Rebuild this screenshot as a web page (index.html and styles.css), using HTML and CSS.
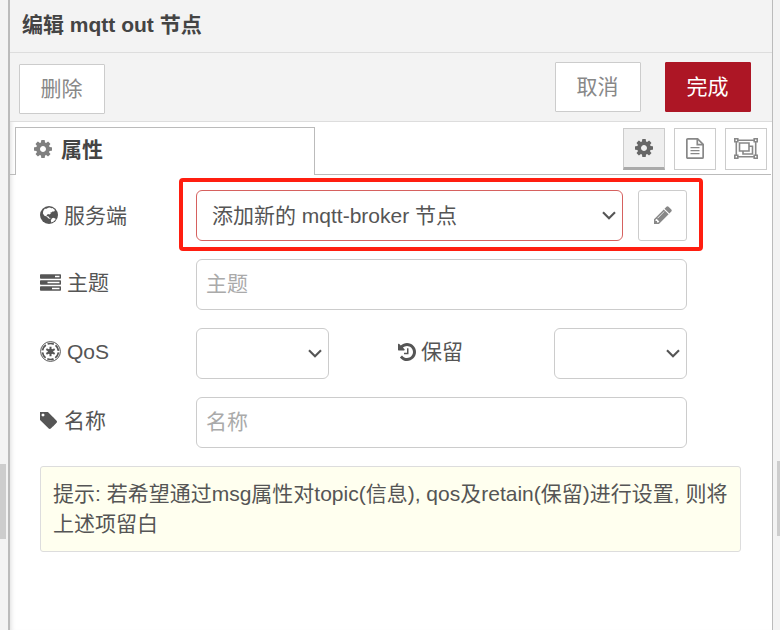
FILE: index.html
```html
<!DOCTYPE html>
<html lang="zh-CN">
<head>
<meta charset="utf-8">
<title>编辑 mqtt out 节点</title>
<link rel="stylesheet" href="styles.css">
</head>
<body>
<svg class="defs" aria-hidden="true">
  <symbol id="cog" viewBox="128 128 1536 1536"><path d="M1152 896q0-106-75-181t-181-75-181 75-75 181 75 181 181 75 181-75 75-181zm512-109v222q0 12-8 23t-20 13l-185 28q-19 54-39 91 35 50 107 138 10 12 10 25t-9 23q-27 37-99 108t-94 71q-12 0-26-9l-138-108q-44 23-91 38-16 136-29 186-7 28-36 28h-222q-14 0-24.5-8.5t-11.5-21.5l-28-184q-49-16-90-37l-141 107q-10 9-25 9-14 0-25-11-126-114-165-168-7-10-7-23 0-12 8-23 15-21 51-66.5t54-70.5q-27-50-41-99l-183-27q-13-2-21-12.5t-8-23.5v-222q0-12 8-23t19-13l186-28q14-46 39-92-40-57-107-138-10-12-10-24 0-10 9-23 26-36 98.5-107.5t94.5-71.5q13 0 26 10l138 107q44-23 91-38 16-136 29-186 7-28 36-28h222q14 0 24.5 8.5t11.5 21.5l28 184q49 16 90 37l142-107q9-9 24-9 13 0 25 10 129 119 165 170 7 8 7 22 0 12-8 23-15 21-51 66.5t-54 70.5q26 50 41 98l183 28q13 2 21 12.5t8 23.5z"/></symbol>
  <symbol id="chevron" viewBox="0 0 14 9"><path d="M1 1.2l6 6 6-6" fill="none" stroke="#555" stroke-width="2.1"/></symbol>
</svg>
<div class="workspace">
  <div class="gutter"><div class="thumb thumb-left"></div></div>
  <main class="tray">
    <header class="title">编辑 mqtt out 节点</header>
    <div class="toolbar">
      <button class="btn btn-delete">删除</button>
      <button class="btn btn-cancel">取消</button>
      <button class="btn btn-done">完成</button>
    </div>
    <div class="tabs">
      <div class="tab-lead"></div>
      <div class="tab"><svg class="i18"><use href="#cog"/></svg><span>属性</span></div>
      <div class="tab-tools">
        <button class="tool active"><svg class="i18"><use href="#cog"/></svg></button>
        <button class="tool"><svg class="icon-file" viewBox="0 0 18 21"><g fill="none" stroke="currentColor" stroke-width="1.700"><path d="M1.850.85h9.800l5.500 5.500v12.800q0 1-1 1H1.850q-1 0-1-1V1.850q0-1 1-1z"/><path d="M11.300 1v5.700H17"/><path stroke-width="1.300" d="M4.500 9.600h9M4.500 12.600h9M4.500 15.600h9"/></g></svg></button>
        <button class="tool"><svg class="icon-group" viewBox="0 0 24 21"><g fill="none" stroke="currentColor" stroke-width="1.600"><path d="M4 2.300h16M4 18.700h16M2.300 4v13M21.700 4v13"/><path d="M5.500 5h9.500v8H5.500z"/><path d="M15 8.200h3.500v7.800H9v-3"/><path d="M.8.8h3v3h-3zM20.200.8h3v3h-3zM.8 17.200h3v3h-3zM20.200 17.200h3v3h-3z"/></g></svg></button>
      </div>
    </div>
    <form class="form">
      <div class="row">
        <label class="server"><svg class="i18" viewBox="0 0 18 18"><circle cx="9" cy="9" r="9"/><path class="land" d="M8.300 1.800L10 1.500l1.200.8 1.200-.4 2.600 2.200-.8 1.500-1.700-.2-1.200 1-1 .2.500 1.100-1.500.8-1.300-.5-1.600 1.400 1 .8 1.200.2.6 1.300 1.600.2-1 .8-1.600-.4-1.500-1.700-2.300-.8-1.500-2.400.3-2.500 1.500-2.100L6.400 2.700zM11.800 12.400l1.300-.6 2.300.8.2 1-2 2-2.300.8-.5-1.800zM4.800 5.400l1.500-.8 1 .6-.8 1.200z"/></svg>服务端</label>
        <div class="select broker">添加新的 mqtt-broker 节点<svg class="chev"><use href="#chevron"/></svg></div>
        <button class="edit" type="button"><svg class="i18" viewBox="128 128 1536 1536"><path d="M491 1536l91-91-235-235-91 91v107h128v128h107zm523-928q0-22-22-22-10 0-17 7l-542 542q-7 7-7 17 0 22 22 22 10 0 17-7l542-542q7-7 7-17zm-54-192l416 416-832 832h-416v-416zm683 96q0 53-37 90l-166 166-416-416 166-165q36-38 90-38 53 0 91 38l235 234q37 39 37 91z"/></svg></button>
        <div class="highlight"></div>
      </div>
      <div class="row">
        <label><svg class="icon-tasks" viewBox="0 128 1792 1408"><path fill-rule="evenodd" d="M1024 1408h640v-128h-640zM640 896h1024v-128H640zM1280 384h384v-128h-384zM64 1152h1664q64 0 64 64v256q0 64-64 64H64q-64 0-64-64v-256q0-64 64-64zM64 640h1664q64 0 64 64v256q0 64-64 64H64q-64 0-64-64V704q0-64 64-64zM64 128h1664q64 0 64 64v256q0 64-64 64H64q-64 0-64-64V192q0-64 64-64z"/></svg>主题</label>
        <input class="text" type="text" placeholder="主题">
      </div>
      <div class="row">
        <label><svg class="icon-empire" viewBox="0 0 21 21"><g fill="none" stroke="currentColor"><circle cx="10.500" cy="10.500" r="9.900" stroke-width="1"/><circle cx="10.500" cy="10.500" r="8" stroke-width="1.700" stroke-dasharray="6.400 1.978" stroke-dashoffset="-.989"/><path stroke-width="2" d="M10.500 5.700v9.600M6.350 8.100l8.300 4.800M14.650 8.100l-8.300 4.800"/></g><circle cx="10.500" cy="10.500" r="2.700"/></svg>QoS</label>
        <div class="select small"><svg class="chev"><use href="#chevron"/></svg></div>
        <label class="retain"><svg class="i18" viewBox="128 128 1536 1536"><path d="M1664 896q0 156-61 298t-164 245-245 164-298 61q-172 0-327-72.500t-264-204.500q-7-10-6.500-22.500t8.500-20.500l137-138q10-9 25-9 16 2 23 12 73 95 179 147t225 52q104 0 198.500-40.500t163.500-109.500 109.500-163.500 40.500-198.500-40.500-198.500-109.500-163.500-163.500-109.500-198.500-40.500q-98 0-188 35.500t-160 101.500l137 138q31 30 14 69-17 40-59 40h-448q-26 0-45-19t-19-45v-448q0-42 40-59 39-17 69 14l130 129q107-101 244.500-156.500t284.500-55.500q156 0 298 61t245 164 164 245 61 298zm-640-288v448q0 14-9 23t-23 9h-320q-14 0-23-9t-9-23v-64q0-14 9-23t23-9h224v-352q0-14 9-23t23-9h64q14 0 23 9t9 23z"/></svg>保留</label>
        <div class="select small"><svg class="chev"><use href="#chevron"/></svg></div>
      </div>
      <div class="row">
        <label><svg class="i18" viewBox="192 192 1536 1536"><path d="M576 448q0-53-37.500-90.500t-90.500-37.500-90.500 37.500-37.500 90.500 37.500 90.500 90.500 37.500 90.500-37.500 37.500-90.500zm1067 576q0 53-37 90l-491 492q-39 37-91 37-53 0-90-37l-715-716q-38-37-64.500-101t-26.500-117v-416q0-52 38-90t90-38h416q53 0 117 26.500t102 64.500l715 714q37 39 37 91z"/></svg>名称</label>
        <input class="text" type="text" placeholder="名称">
      </div>
      <div class="tips">提示: 若希望通过msg属性对topic(信息), qos及retain(保留)进行设置, 则将上述项留白</div>
    </form>
  </main>
  <div class="gutter gutter-right"><div class="thumb thumb-right"></div></div>
</div>
</body>
</html>
```
FILE: styles.css
```css
* { box-sizing: border-box; }
body {
  margin: 0;
  overflow: hidden;
  color: #555;
  font: 21px/30px "Liberation Sans", "Noto Sans CJK SC", sans-serif;
}
button, input { font: inherit; margin: 0; }
svg { display: block; flex: none; fill: currentColor; }
.defs { position: absolute; width: 0; height: 0; }
.i18 { width: 18px; height: 18px; }

.workspace { display: flex; height: 630px; background: #f3f3f3; }
.gutter { width: 8px; flex: none; }
.gutter-right { padding-left: 4px; width: 7px; }
.thumb { height: 75px; background: #cdcdcd; }
.thumb-left { width: 6px; margin-top: 464px; }
.thumb-right { width: 3px; margin-top: 461px; }

.tray {
  width: 765px;
  flex: none;
  border-left: 2px solid #bbb;
  border-right: 1px solid #bbb;
  background: #fff;
  box-shadow: inset 5px 0 5px -4px #ddd;
}
.title {
  height: 53px;
  padding: 10px 12px;
  border-bottom: 1px solid #ddd;
  background: #f3f3f3;
  color: #444;
  font-weight: bold;
}
.toolbar {
  display: flex;
  height: 69px;
  padding: 9px 21px 0 9px;
  border-bottom: 1px solid #ddd;
  background: #f3f3f3;
}
.btn {
  width: 86px;
  height: 50px;
  padding: 0 1px 0 0;
  border: 1px solid #ccc;
  border-radius: 1px;
  background: #fff;
  color: #888;
}
.btn-delete { margin: 2px auto 0 0; }
.btn-done {
  margin-left: 24px;
  border-color: #ad1625;
  background: #ad1625;
  color: #fff;
}

.tabs { display: flex; height: 53px; padding-right: 1px; }
.tab-lead { width: 5px; border-bottom: 1px solid #bbb; }
.tab {
  display: flex;
  align-items: center;
  gap: 9px;
  width: 300px;
  height: 48px;
  margin-top: 5px;
  padding: 0 18px 3px;
  border: solid #bbb;
  border-width: 1px 1px 0;
  color: #444;
  font-weight: bold;
}
.tab svg { margin-top: -2px; color: #808080; }
.tab-tools {
  display: flex;
  flex: 1;
  justify-content: flex-end;
  gap: 9px;
  padding: 6px 4px 0 0;
  border-bottom: 1px solid #bbb;
}
.tool {
  display: flex;
  align-items: center;
  justify-content: center;
  width: 42px;
  height: 42px;
  padding: 0 0 1px;
  border: 1px solid #ccc;
  background: #fff;
  color: #888;
}
.tool.active {
  border-bottom: 3px solid #aaa;
  background: #efefef;
  color: #666;
}
.tool.active svg { margin-top: 1px; }
.icon-file { width: 18px; height: 21px; }
.icon-group { width: 24px; height: 21px; }

.form { padding: 15px 30px 0; }
.row {
  position: relative;
  display: flex;
  height: 51px;
  margin-bottom: 18px;
}
label {
  display: flex;
  align-items: center;
  gap: 6px;
  width: 156px;
  height: 48px;
}
label svg { margin-top: -1px; }
.server { height: 51px; }
.land { fill: #fff; }
.icon-tasks { width: 21px; height: 17px; margin-top: -2px; }
.icon-empire { width: 21px; height: 21px; }
.select, .text {
  border: 1px solid #ccc;
  border-radius: 6px;
  background: #fff;
  color: #555;
}
.select {
  display: flex;
  align-items: center;
  justify-content: flex-end;
  padding-right: 6px;
}
.broker {
  justify-content: space-between;
  width: 427px;
  padding-left: 15px;
  border-color: #d6615f;
}
.small { width: 133px; }
.chev { width: 14px; height: 9px; }
.text { width: 491px; padding: 0 9px 2px; }
.text::placeholder { color: #aaa; opacity: 1; }
.retain { margin-left: 69px; gap: 5px; }
.edit {
  display: flex;
  align-items: center;
  justify-content: center;
  width: 49px;
  margin-left: 15px;
  padding: 0 0 1px;
  border: 1px solid #ccc;
  border-radius: 3px;
  background: #fff;
  color: #888;
}
/* Callout frame drawn over the broker row */
.highlight {
  position: absolute;
  top: -12px;
  left: 139px;
  width: 524px;
  height: 73px;
  border: 4px solid #ff1e10;
  border-radius: 4px;
  pointer-events: none;
}
.tips {
  width: 701px;
  height: 86px;
  padding: 12px;
  border: 1px solid #ddd;
  border-radius: 3px;
  background: #ffffef;
}
```
